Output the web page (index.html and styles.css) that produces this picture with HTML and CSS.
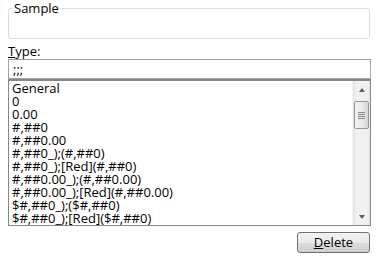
FILE: index.html
```html
<!DOCTYPE html>
<html>
<head>
<meta charset="utf-8">
<link rel="stylesheet" href="styles.css">
</head>
<body>
<div class="dialog">
  <fieldset class="sample">
    <legend class="sample-legend">Sample</legend>
  </fieldset>
  <div class="type-label"><u>T</u>ype:</div>
  <div class="type-input">;;;</div>
  <div class="list">
    <div class="items">
      <div class="item">General</div>
      <div class="item">0</div>
      <div class="item">0.00</div>
      <div class="item">#,##0</div>
      <div class="item">#,##0.00</div>
      <div class="item">#,##0_);(#,##0)</div>
      <div class="item">#,##0_);[Red](#,##0)</div>
      <div class="item">#,##0.00_);(#,##0.00)</div>
      <div class="item">#,##0.00_);[Red](#,##0.00)</div>
      <div class="item">$#,##0_);($#,##0)</div>
      <div class="item">$#,##0_);[Red]($#,##0)</div>
    </div>
    <div class="scrollbar">
      <div class="arrow up"></div>
      <div class="track">
        <div class="thumb"><span class="grip"></span></div>
      </div>
      <div class="arrow down"></div>
    </div>
  </div>
  <div class="actions">
    <button class="btn"><u>D</u>elete</button>
  </div>
</div>
</body>
</html>
```
FILE: styles.css
```css
html, body {
  margin: 0;
  padding: 0;
  background: #fff;
}
body {
  font-family: "Open Sans", "Noto Sans", sans-serif;
  font-size: 13px;
  color: #000;
}
.dialog {
  width: 363px;
  padding: 0 0 0 8px;
  display: flex;
  flex-direction: column;
}
.sample {
  margin: 0;
  margin-top: 1px;
  width: 362px;
  height: 38px;
  box-sizing: border-box;
  border: 1px solid #d5dfe5;
  border-radius: 3px;
  padding: 0;
}
.sample-legend {
  padding: 0 1px;
  margin-left: 4px;
  line-height: 14px;
}
.type-label {
  margin-top: 5px;
  line-height: 14px;
  height: 15px;
}
.type-input {
  height: 20px;
  box-sizing: border-box;
  border: 1px solid #a5a5a5;
  border-top-color: #9a9a9a;
  padding: 1px 4px;
  line-height: 16px;
}
.list {
  height: 147px;
  box-sizing: border-box;
  border: 1px solid #828790;
  border-top: 2px solid #828790;
  display: flex;
  overflow: hidden;
}
.items {
  flex: 1;
  padding: 1px 3px;
}
.item {
  height: 13px;
  line-height: 13px;
  white-space: nowrap;
}
.scrollbar {
  width: 17px;
  display: flex;
  flex-direction: column;
  background: linear-gradient(to right, #e3e3e3, #f1f1f1 20%, #f1f1f1 80%, #e8e8e8);
  border-left: 1px solid #f4f4f4;
}
.arrow {
  height: 17px;
  display: flex;
  align-items: center;
  justify-content: center;
}
.arrow::before {
  content: "";
  width: 0;
  height: 0;
  border-left: 3.5px solid transparent;
  border-right: 3.5px solid transparent;
}
.arrow.up::before {
  border-bottom: 4px solid #606060;
}
.arrow.down::before {
  border-top: 4px solid #606060;
}
.track {
  flex: 1;
  padding: 3px 1px 0 1px;
}
.thumb {
  height: 28px;
  box-sizing: border-box;
  border: 1px solid #979797;
  border-radius: 2px;
  background: linear-gradient(to right, #f2f2f2, #ebebeb 50%, #d6d6d6);
  display: flex;
  align-items: center;
  justify-content: center;
}
.grip {
  width: 7px;
  height: 7px;
  background: repeating-linear-gradient(to bottom, #8a8a8a 0 1px, transparent 1px 2px);
}
.actions {
  display: flex;
  justify-content: flex-end;
  padding-top: 6px;
  padding-right: 1px;
}
.btn {
  width: 73px;
  height: 21px;
  box-sizing: border-box;
  border: 1px solid #707070;
  border-radius: 3px;
  background: linear-gradient(to bottom, #f2f2f2 0%, #ebebeb 50%, #dddddd 51%, #cfcfcf 100%);
  font-family: inherit;
  font-size: 13px;
  color: #000;
  padding: 0;
  line-height: 17px;
}
```
